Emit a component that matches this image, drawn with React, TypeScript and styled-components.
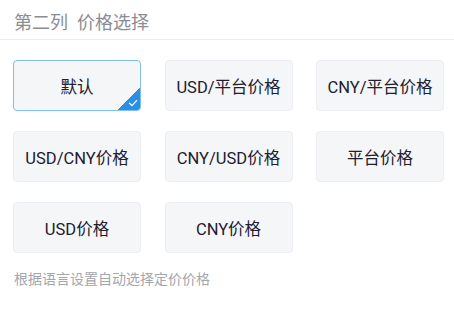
import React, { useState } from 'react';
import styled, { createGlobalStyle } from 'styled-components';

const GlobalStyle = createGlobalStyle`
    html, body {
        margin: 0;
        padding: 0;
        background: #ffffff;
        font-family: Roboto, "Noto Sans CJK SC", sans-serif;
    }
`;

const Panel = styled.div`
    width: 454px;
    height: 313px;
    background: #ffffff;
`;

const Header = styled.div`
    height: 40px;
    padding: 3px 0 0 14px;
    display: flex;
    align-items: center;
    font-size: 18px;
    color: #8a8d93;
    border-bottom: 1px solid #ebedf0;
    box-sizing: border-box;
    margin-bottom: 20px;
`;

const Grid = styled.div`
    display: grid;
    grid-template-columns: repeat(3, 128px);
    column-gap: 23.5px;
    row-gap: 20px;
    padding: 0 13px;
`;

type OptionProps = {
    $active: boolean;
};

const Option = styled.button<OptionProps>`
    position: relative;
    height: 51px;
    display: flex;
    align-items: center;
    justify-content: center;
    box-sizing: border-box;
    padding: 0;
    border-radius: 4px;
    border: 1px solid ${props => props.$active ? '#7fc0ec' : '#eceef1'};
    background: #f5f6f8;
    color: #1c2030;
    font-family: Roboto, "Noto Sans CJK SC", sans-serif;
    font-size: 16.5px;
    overflow: hidden;
    cursor: pointer;
`;

const Corner = styled.span`
    position: absolute;
    right: 0;
    bottom: 0;
    width: 22px;
    height: 22px;
    background: linear-gradient(135deg, transparent 50%, #2a8fe6 50%);
    display: flex;
    align-items: flex-end;
    justify-content: flex-end;
`;

const Check = styled.svg`
    width: 10px;
    height: 10px;
    margin: 0 2px 2px 0;
`;

const Hint = styled.div`
    padding: 15px 14px 0;
    font-size: 14px;
    color: #a3a6ad;
`;

const options = [
    '默认',
    'USD/平台价格',
    'CNY/平台价格',
    'USD/CNY价格',
    'CNY/USD价格',
    '平台价格',
    'USD价格',
    'CNY价格',
];

const App: React.FC = () => {
    const [selected, setSelected] = useState(0);

    return (
        <Panel>
            <GlobalStyle />
            <Header>第二列&nbsp;&nbsp;价格选择</Header>
            <Grid>
                {options.map((label, i) => (
                    <Option key={label} $active={selected === i} onClick={() => setSelected(i)}>
                        {label}
                        {selected === i && (
                            <Corner>
                                <Check viewBox="0 0 10 10">
                                    <path d="M1.5 5.2 L4 7.6 L8.6 2.6" fill="none" stroke="#ffffff" strokeWidth="1.3" strokeLinecap="round" strokeLinejoin="round" />
                                </Check>
                            </Corner>
                        )}
                    </Option>
                ))}
            </Grid>
            <Hint>根据语言设置自动选择定价价格</Hint>
        </Panel>
    );
}

export default App;
